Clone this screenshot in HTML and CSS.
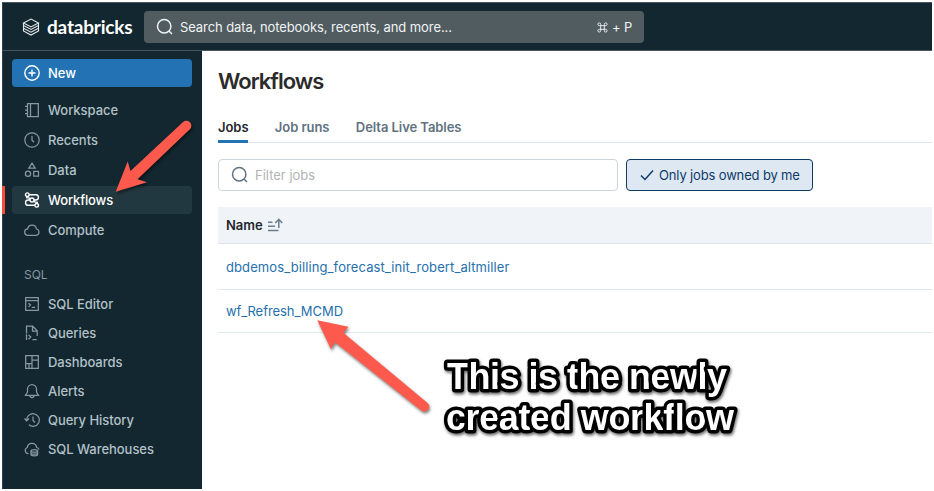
FILE: index.html
```html
<!DOCTYPE html>
<html lang="en">
<head>
<meta charset="utf-8">
<title>Workflows</title>
<link rel="stylesheet" href="styles.css">
</head>
<body>
<div class="window">
  <header class="topbar">
    <div class="brand">
      <svg class="brand-mark" viewBox="0 0 18 18"><path d="M1.500 5 9 1l7.500 4L9 9zM1.500 5v2.500L9 11.500l7.500-4V5M1.500 7.500v2.700L9 14.200l7.500-4V7.500M1.500 10.200v2.700L9 17l7.500-4.100v-2.700"/></svg>
      <span class="brand-name">databricks</span>
    </div>
    <div class="search">
      <svg class="lens" viewBox="0 0 18 18"><circle cx="8.2" cy="8.2" r="6.7"/><path d="m13 13 3 3"/></svg>
      <span class="search-text">Search data, notebooks, recents, and more...</span>
      <span class="shortcut"><svg class="cmd" viewBox="0 0 12 12"><path d="M4 4V2.600A1.500 1.500 0 1 0 2.500 4h7A1.500 1.500 0 1 0 8 2.600v6.900A1.500 1.500 0 1 0 9.500 8h-7A1.500 1.500 0 1 0 4 9.500z"/></svg>+ P</span>
    </div>
  </header>
  <div class="body">
    <nav class="sidebar">
      <a class="new"><svg class="icon" viewBox="0 0 16 16"><circle cx="8" cy="8" r="7.200"/><path d="M8 4.500v7M4.500 8h7"/></svg><span>New</span></a>
      <div class="group main-group">
        <a class="item"><svg class="icon" viewBox="0 0 16 16"><path d="M3.500 1.500h10.800v13H3.500zM6.500 1.500v13M1 4.300h2.500M1 8h2.500M1 11.700h2.500"/></svg><span>Workspace</span></a>
        <a class="item"><svg class="icon" viewBox="0 0 16 16"><circle cx="8" cy="8" r="7.200"/><path d="M8 4v4.300l2 2"/></svg><span>Recents</span></a>
        <a class="item"><svg class="icon" viewBox="0 0 16 16"><path d="m8 1.200 3.200 5H4.800zM9.700 9.300h4.800v4.900H9.700z"/><circle cx="4" cy="11.700" r="2.600"/></svg><span>Data</span></a>
        <a class="item active"><svg class="icon" viewBox="0 0 16 16"><circle cx="3.300" cy="2.700" r="1.800"/><circle cx="8" cy="8" r="2"/><circle cx="12.700" cy="13.300" r="1.800"/><path d="M5.100 2.700h6.700a2.650 2.650 0 0 1 0 5.300H10M6 8H4.200a2.650 2.650 0 0 0 0 5.300h6.700M6.400 6.700C5.200 5.600 4.200 5.600 2 5.600M9.600 9.300c1.200 1.100 2.200 1.100 4.400 1.100"/></svg><span>Workflows</span></a>
        <a class="item"><svg class="icon" viewBox="0 0 16 16"><path d="M4 13.300a3.200 3.200 0 0 1-.3-6.400 4.400 4.400 0 0 1 8.700.1 3.200 3.200 0 0 1-.2 6.300z"/></svg><span>Compute</span></a>
      </div>
      <div class="heading">SQL</div>
      <div class="group sql-group">
        <a class="item"><svg class="icon" viewBox="0 0 16 16"><path d="M1.700 1.600h12.600v12.800H1.700zM1.700 4.700h12.600M4.500 7.300l2 1.800-2 1.800M7.700 11.300h3.500"/></svg><span>SQL Editor</span></a>
        <a class="item"><svg class="icon" viewBox="0 0 16 16"><path d="M2.500 8.500V1.200h6.200l4.500 4.500V11M8.500 1.300V6H13M2.500 9.300v5.700M4.500 10l2.300 2-2.300 2.200M8.500 14.500h4.200"/></svg><span>Queries</span></a>
        <a class="item"><svg class="icon" viewBox="0 0 16 16"><path d="M1.700 1.600h12.600v12.800H1.700zM8 1.600v12.800M1.700 9.500H8M8 6h6.300M5 9.500v4.900"/></svg><span>Dashboards</span></a>
        <a class="item"><svg class="icon" viewBox="0 0 16 16"><path d="M1.500 12.300 3.500 9V6a4.500 4.500 0 0 1 9 0v3l2 3.300zM6 12.500a2 2 0 0 0 4 0"/></svg><span>Alerts</span></a>
        <a class="item"><svg class="icon" viewBox="0 0 16 16"><path d="M2.700 8.600a6.300 6.300 0 1 1 2.200 4.200M.5 6.500l2.200 2.300L5 6.500M9 4.500v4l2 2"/></svg><span>Query History</span></a>
        <a class="item"><svg class="icon" viewBox="0 0 16 16"><path d="M4.500 12.500A3.100 3.100 0 0 1 3.300 6.500a4.700 4.700 0 0 1 9.300 0 3.100 3.100 0 0 1 2.400 2"/><ellipse cx="10.300" cy="9.900" rx="3.300" ry="1.300"/><path d="M7 10v3.500c0 1.800 6.600 1.800 6.600 0V10M7 12c0 1.500 6.600 1.500 6.600 0"/></svg><span>SQL Warehouses</span></a>
      </div>
    </nav>
    <main class="content">
      <h1>Workflows</h1>
      <div class="tabs">
        <a class="tab selected">Jobs</a><a class="tab">Job runs</a><a class="tab">Delta Live Tables</a>
      </div>
      <div class="filters">
        <div class="filter-input"><svg class="lens" viewBox="0 0 18 18"><circle cx="8.200" cy="8.200" r="6.700"/><path d="m13 13 3 3"/></svg><span>Filter jobs</span></div>
        <button class="owned"><svg class="check" viewBox="0 0 14 12"><path d="m1 6.500 4 4L13 1.500"/></svg><span>Only jobs owned by me</span></button>
      </div>
      <div class="table">
        <div class="thead"><span>Name</span><svg class="sort" viewBox="0 0 15 14"><path d="M0 4.200h4.500M0 8.300h7M0 12.500h10.500M10.800 10V1.500M7.300 5l3.500-3.600L14.300 5"/></svg></div>
        <div class="row first"><a>dbdemos_billing_forecast_init_robert_altmiller</a></div>
        <div class="row second"><a>wf_Refresh_MCMD</a></div>
      </div>
    </main>
  </div>
</div>
<svg class="annotations" viewBox="0 0 934 491">
  <g class="arrow">
    <path d="M115.700 191.800 127.700 161.500 130.500 171 182.800 122.200A5 5 0 0 1 189.900 129.300L137.500 179.200 147 182.300Z"/>
    <path d="M317.300 320.300 348.500 326.700 343.300 332.700 427.300 402.700A4.900 4.900 0 0 1 421.300 410.500L335 342.300 331 349.300Z"/>
  </g>
  <g class="note">
    <text x="447" y="389.300" textLength="280">This is the newly</text>
    <text x="446" y="430.300" textLength="288">created workflow</text>
  </g>
</svg>
</body>
</html>
```
FILE: styles.css
```css
* { box-sizing: border-box; }
body {
  margin: 0;
  width: 934px;
  height: 491px;
  overflow: hidden;
  background: #fff;
  font-family: Inter, "Liberation Sans", sans-serif;
  font-size: 13px;
  line-height: 20px;
  color: #1f272d;
}
.window {
  width: 930px;
  height: 487px;
  margin: 2px;
  display: flex;
  flex-direction: column;
  overflow: hidden;
}
svg { flex: none; fill: none; stroke: currentColor; }
span, a, button { white-space: nowrap; }

.topbar {
  height: 49px;
  flex: none;
  display: flex;
  align-items: center;
  background: #12272f;
  border-top: 1px solid #46565c;
  border-bottom: 1px solid #46565c;
  border-left: 1px solid #2d4047;
  color: #fff;
}
.brand { display: flex; align-items: center; width: 141px; padding-left: 19px; gap: 7px; }
.brand-mark { width: 18px; height: 18px; stroke-width: 1.100; color: #e3e8ea; }
.brand-name {
  font-family: Lato, Inter, sans-serif;
  font-size: 19px;
  font-weight: 700;
  letter-spacing: -0.200px;
}
.search {
  width: 500px;
  height: 32px;
  margin-top: 1px;
  padding: 0 12px 0 11px;
  display: flex;
  align-items: center;
  background: #505c60;
  border-radius: 4px;
  color: #f0f3f4;
}
.lens { width: 18px; height: 18px; stroke-width: 1.500; }
.search-text { margin-left: 7px; letter-spacing: -0.090px; }
.search .lens { margin-left: 1px; margin-right: -1px; }
.shortcut { margin-left: auto; display: flex; align-items: center; gap: 4px; letter-spacing: -0.200px; }
.cmd { width: 11px; height: 11px; stroke-width: 1; }

.body { flex: 1; display: flex; min-height: 0; }
.sidebar {
  width: 200px;
  flex: none;
  padding: 8px 10px 0 9px;
  background: #12272f;
  border-left: 1px solid #2d4047;
  color: #b4c1c8;
  font-weight: 500;
  letter-spacing: -0.040px;
}
.icon { width: 16px; height: 16px; stroke-width: 1.250; color: #8698a1; }
.new, .item {
  display: flex;
  align-items: center;
  gap: 8px;
  height: 28px;
  padding-left: 12px;
  border-radius: 4px;
}
.new { background: #2272b4; color: #fff; }
.new .icon { color: #fff; stroke-width: 1.400; }
.group { display: flex; flex-direction: column; }
.main-group { margin-top: 9px; gap: 2px; }
.sql-group { margin-top: 5px; gap: 1px; }
.active { position: relative; background: #223840; color: #fff; letter-spacing: -0.150px; }
.active .icon { color: #fff; stroke-width: 1.400; }
.active::before {
  content: "";
  position: absolute;
  left: -10px;
  top: 0;
  width: 3px;
  height: 28px;
  background: #ff4b3a;
}
.heading { margin-top: 21px; padding-left: 12px; font-size: 12px; font-weight: 400; color: #8698a1; }

.content { flex: 1; min-width: 0; padding: 14px 0 0 16px; }
h1 { margin: 0; font-size: 22px; line-height: 32px; font-weight: 600; letter-spacing: -1px; color: #2b2b2b; }
.tabs {
  display: flex;
  height: 32px;
  margin-top: 14px;
  padding-top: 6px;
  gap: 26.400px;
  position: relative;
  font-weight: 600;
  letter-spacing: -0.060px;
  color: #5f7281;
}
.tabs::after { content: ""; position: absolute; left: 0; right: 0; top: 31px; height: 1px; background: #e2e8ee; }
.tab { height: 26px; }
.selected { color: #1f272d; border-bottom: 3px solid #2272b4; position: relative; z-index: 1; }
.filters { display: flex; gap: 8px; margin-top: 16px; }
.filter-input {
  width: 400px;
  height: 32px;
  padding-left: 12px;
  display: flex;
  align-items: center;
  gap: 6px;
  border: 1px solid #cdd4dc;
  border-radius: 4px;
  color: #b3b3b3;
}
.filter-input .lens { color: #5f7281; }
.owned {
  width: 187px;
  height: 32px;
  padding: 0 0 0 13px;
  display: flex;
  align-items: center;
  gap: 5px;
  border: 1px solid #0e3a67;
  border-radius: 4px;
  background: #dee8f3;
  color: #0e3a67;
  font: inherit;
  letter-spacing: -0.150px;
}
.check { width: 14px; height: 12px; stroke-width: 1.500; }
.table { margin-top: 16px; }
.thead {
  height: 37px;
  padding-left: 8px;
  display: flex;
  align-items: center;
  gap: 5px;
  background: #f0f3f7;
  border-bottom: 1px solid #dce4ea;
  font-weight: 600;
}
.sort { width: 15px; height: 14px; color: #6b7f8d; stroke-width: 1.500; }
.row { padding-left: 8px; display: flex; align-items: center; border-bottom: 1px solid #e2e9ec; color: #2670ad; }
.first { height: 46px; letter-spacing: 0.100px; }
.second { height: 43px; letter-spacing: -0.050px; }

.annotations { position: absolute; left: 0; top: 0; width: 934px; height: 491px; pointer-events: none; }
.arrow { fill: #fd5a4d; stroke: none; filter: drop-shadow(1px 2px 1.500px rgba(0, 0, 0, 0.500)); }
.note {
  font: bold 36px "Liberation Sans", Arial, sans-serif;
  fill: #fff;
  stroke: #000;
  stroke-width: 7px;
  stroke-linejoin: round;
  paint-order: stroke;
  filter: drop-shadow(1px 2px 1.500px rgba(0, 0, 0, 0.600));
}
```
